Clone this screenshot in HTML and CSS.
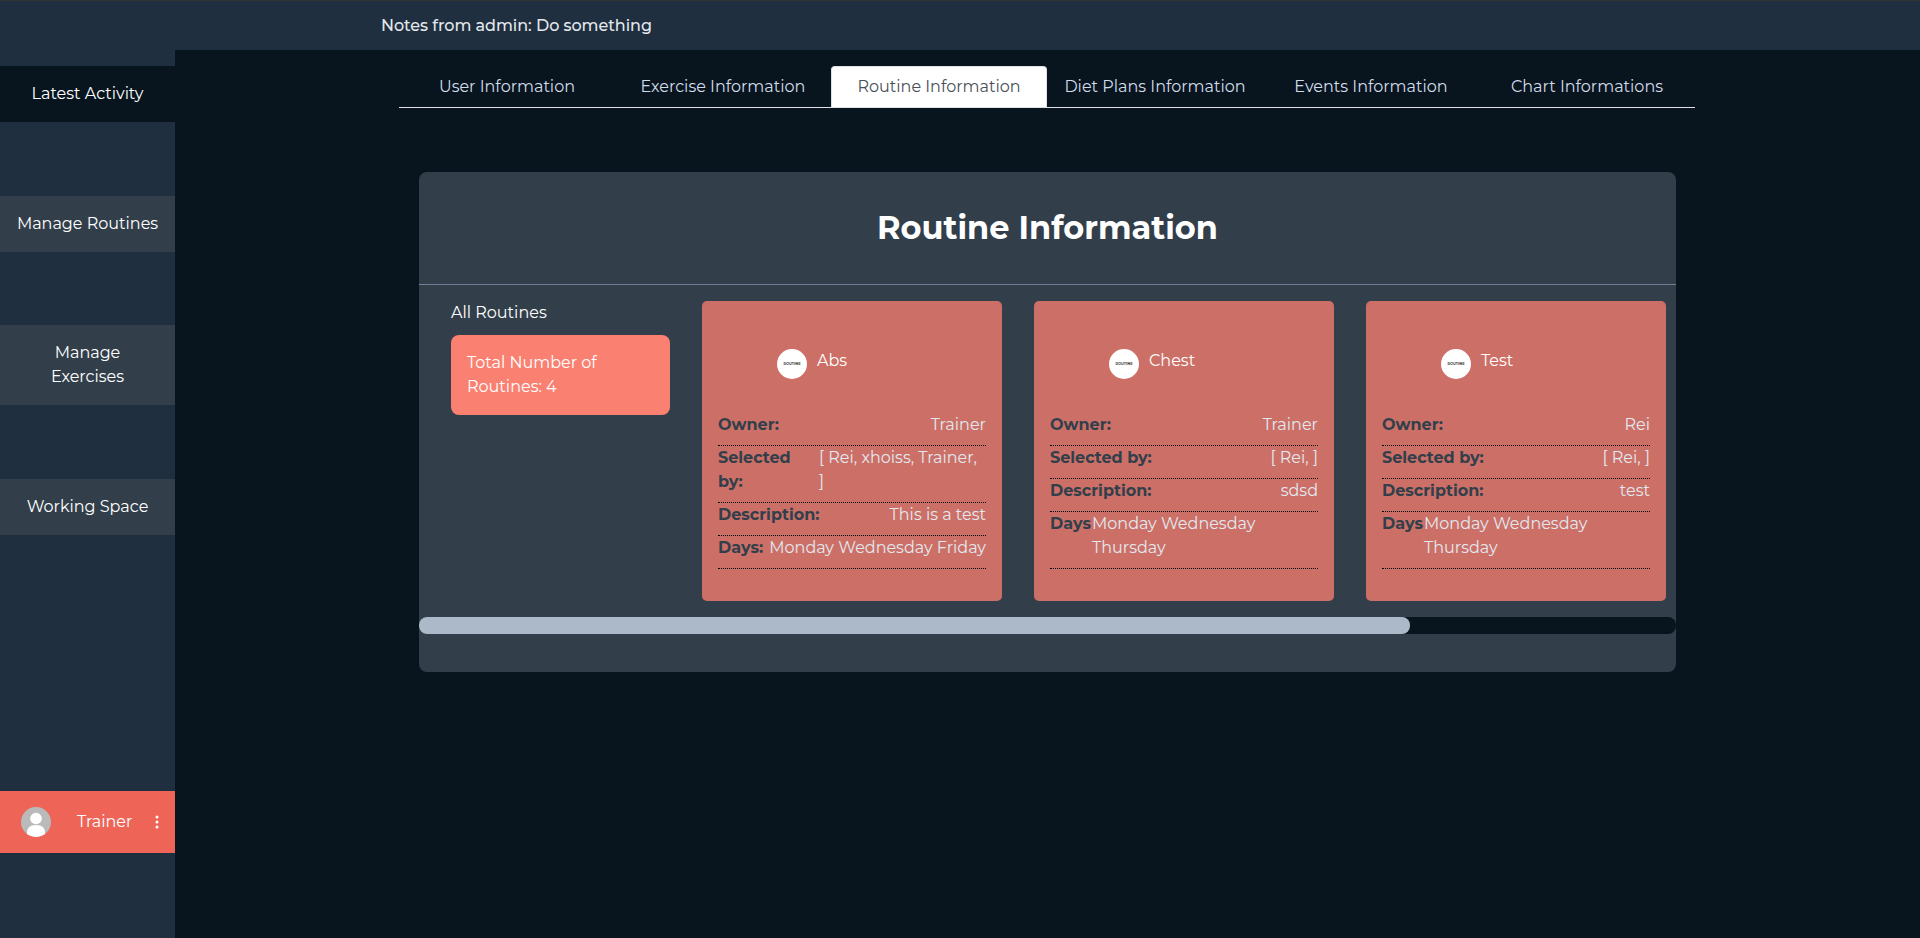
FILE: index.html
```
<!DOCTYPE html>
<html lang="en">
<head>
<meta charset="utf-8">
<title>Routine Information</title>
<link rel="stylesheet" href="styles.css">
</head>
<body>
<header class="topbar"><p class="note">Notes from admin: Do something</p></header>
<div class="layout">
  <aside class="sidebar">
    <nav class="menu">
      <a class="menu-item active">Latest Activity</a>
      <a class="menu-item">Manage Routines</a>
      <a class="menu-item two-line">Manage<br>Exercises</a>
      <a class="menu-item">Working Space</a>
    </nav>
    <div class="account">
      <svg class="avatar" viewBox="0 0 30 30"><defs><clipPath id="round"><circle cx="15" cy="15" r="15"/></clipPath></defs><g clip-path="url(#round)"><rect width="30" height="30" fill="#bababa"/><circle cx="15" cy="11.500" r="5.800" fill="#fff"/><path d="M6 30v-4.500c0-4.800 3.200-7.500 9-7.500s9 2.700 9 7.500V30z" fill="#fff"/></g></svg>
      <span class="account-name">Trainer</span>
      <svg class="dots" viewBox="0 0 4 14"><circle cx="2" cy="2" r="1.500"/><circle cx="2" cy="7" r="1.500"/><circle cx="2" cy="12" r="1.500"/></svg>
    </div>
  </aside>
  <main class="main">
    <nav class="tabs">
      <a class="tab">User Information</a>
      <a class="tab">Exercise Information</a>
      <a class="tab selected">Routine Information</a>
      <a class="tab">Diet Plans Information</a>
      <a class="tab">Events Information</a>
      <a class="tab">Chart Informations</a>
    </nav>
    <section class="panel">
      <h1 class="title">Routine Information</h1>
      <div class="content">
        <div class="summary">
          <p class="summary-label">All Routines</p>
          <div class="total">Total Number of<br>Routines: 4</div>
        </div>
        <article class="card">
          <div class="card-head"><span class="badge">ROUTINE</span><span class="card-name">Abs</span></div>
          <dl class="row"><dt>Owner:</dt><dd>Trainer</dd></dl>
          <dl class="row"><dt class="label-split">Selected<br>by:</dt><dd class="value-fill">[ Rei, xhoiss, Trainer,<br>]</dd></dl>
          <dl class="row"><dt>Description:</dt><dd>This is a test</dd></dl>
          <dl class="row"><dt>Days:</dt><dd>Monday Wednesday Friday</dd></dl>
        </article>
        <article class="card">
          <div class="card-head"><span class="badge">ROUTINE</span><span class="card-name">Chest</span></div>
          <dl class="row"><dt>Owner:</dt><dd>Trainer</dd></dl>
          <dl class="row"><dt>Selected by:</dt><dd>[ Rei, ]</dd></dl>
          <dl class="row"><dt>Description:</dt><dd>sdsd</dd></dl>
          <dl class="row"><dt class="label-days">Days</dt><dd class="value-fill">Monday Wednesday<br>Thursday</dd></dl>
        </article>
        <article class="card">
          <div class="card-head"><span class="badge">ROUTINE</span><span class="card-name">Test</span></div>
          <dl class="row"><dt>Owner:</dt><dd>Rei</dd></dl>
          <dl class="row"><dt>Selected by:</dt><dd>[ Rei, ]</dd></dl>
          <dl class="row"><dt>Description:</dt><dd>test</dd></dl>
          <dl class="row"><dt class="label-days">Days</dt><dd class="value-fill">Monday Wednesday<br>Thursday</dd></dl>
        </article>
      </div>
      <div class="scroll-track"><div class="scroll-thumb"></div></div>
    </section>
  </main>
</div>
</body>
</html>
```
FILE: styles.css
```
* { box-sizing: border-box; }
body, p, h1, dl, dd { margin: 0; }
body {
  height: 938px;
  overflow: hidden;
  background: #08151f;
  color: #fff;
  font: 16px/24px Montserrat, Inter, sans-serif;
}

.topbar {
  height: 50px;
  padding: 13px 0 0 381px;
  border-top: 1px solid #333;
  background: #1f2f40;
}
.note { color: #e4e8ec; font-weight: 500; letter-spacing: -0.04px; }
.layout { display: flex; height: 888px; }

.sidebar {
  display: flex;
  flex-direction: column;
  width: 175px;
  padding: 16px 0 85px;
  background: #1f2f40;
}
.menu { display: flex; flex-direction: column; gap: 74px; }
.menu-item {
  padding: 16px 0;
  background: #323f4b;
  text-align: center;
  white-space: nowrap;
}
.menu-item.active { background: #08151f; }
.menu-item.two-line { margin-top: -1px; }
.account {
  display: flex;
  align-items: center;
  height: 62px;
  margin-top: auto;
  padding: 0 16px 0 21px;
  background: #ee6558;
}
.avatar { width: 30px; height: 30px; }
.account-name { margin-left: 26px; }
.dots { width: 4px; height: 14px; margin-left: auto; fill: #fff; }

.main { flex: 1; padding: 16px 225px 0 224px; }
.tabs {
  display: grid;
  grid-template-columns: repeat(6, 216px);
  height: 42px;
  border-bottom: 1px solid #dee2e6;
}
.tab {
  height: 41px;
  padding-top: 9px;
  color: #d3dcea;
  text-align: center;
  white-space: nowrap;
}
.tab.selected {
  border: 1px solid #dee2e6;
  border-bottom: 0;
  border-radius: 4px 4px 0 0;
  padding-top: 8px;
  background: #fff;
  color: #495057;
}

.panel {
  width: 1257px;
  height: 500px;
  margin: 64px 0 0 20px;
  border-radius: 8px;
  background: #323f4b;
}
.title {
  height: 113px;
  padding-top: 32px;
  border-bottom: 1px solid #718096;
  font-size: 32px;
  font-weight: 700;
  line-height: 48px;
  text-align: center;
}
.content {
  display: flex;
  gap: 32px;
  padding: 16px 10px 16px 32px;
}
.summary { width: 219px; }
.summary-label { margin-bottom: 10px; }
.total {
  height: 80px;
  padding: 16px;
  border-radius: 8px;
  background: #fa8072;
}
.card {
  width: 300px;
  height: 300px;
  padding: 0 16px;
  border-radius: 5px;
  background: #cc7067;
}
.card-head {
  display: flex;
  gap: 10px;
  height: 112px;
  padding: 48px 0 0 59px;
}
.badge {
  width: 30px;
  height: 30px;
  border-radius: 50%;
  background: #fff;
  color: #444;
  font-size: 3.6px;
  font-weight: 700;
  line-height: 30px;
  text-align: center;
}
.card-name { line-height: 23px; }
.row {
  display: flex;
  justify-content: space-between;
  padding-bottom: 8px;
  border-bottom: 1px dotted #000;
  white-space: nowrap;
}
.row dt { color: #323f4b; font-weight: 700; }
.row dd { color: #e2e8f0; }
.label-split { width: 101px; }
.label-days { width: 42px; }
.row .value-fill { flex: 1; }

.scroll-track { height: 17px; border-radius: 8px; background: #08151f; }
.scroll-thumb { width: 991px; height: 17px; border-radius: 8px; background: #acb9c8; }
```
